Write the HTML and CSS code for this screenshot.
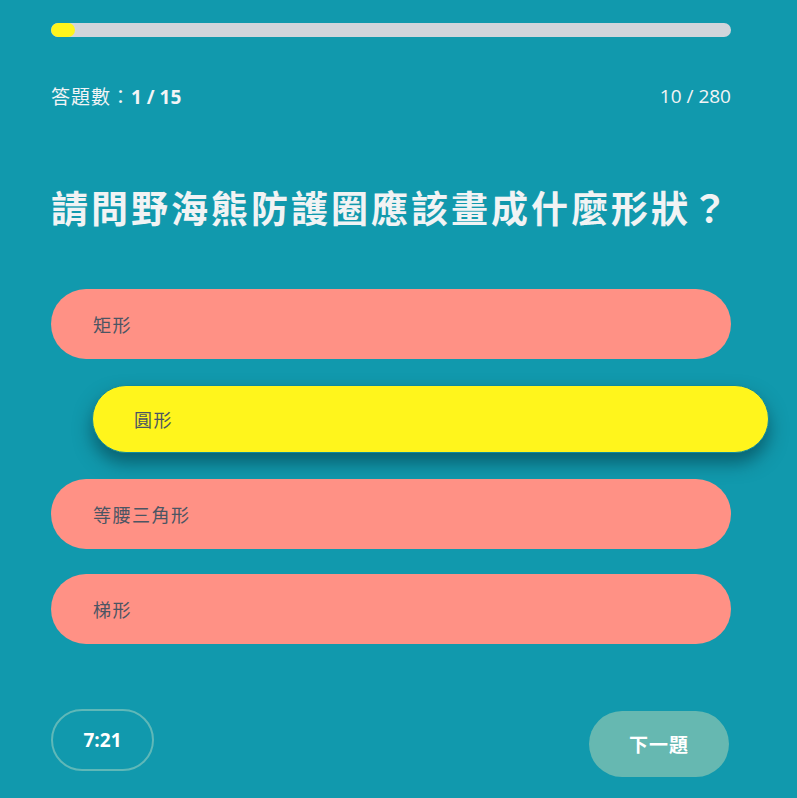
FILE: index.html
```html
<!DOCTYPE html>
<html lang="zh-Hant">
<head>
<meta charset="utf-8">
<link rel="stylesheet" href="styles.css">
</head>
<body>
<div class="quiz">
  <div class="progress"><div class="progress-fill" style="width:24px"></div></div>
  <div class="meta">
    <div class="count"><span class="label">答題數：</span><b>1 / 15</b></div>
    <div class="score">10 / 280</div>
  </div>
  <h1 class="question">請問野海熊防護圈應該畫成什麼形狀？</h1>
  <div class="options">
    <div class="option">矩形</div>
    <div class="option selected">圓形</div>
    <div class="option">等腰三角形</div>
    <div class="option">梯形</div>
  </div>
  <div class="footer">
    <div class="timer">7:21</div>
    <div class="next">下一題</div>
  </div>
</div>
</body>
</html>
```
FILE: styles.css
```css
html, body {
  margin: 0;
  padding: 0;
  background: #1199ad;
  font-family: "Open Sans", "Noto Sans CJK TC", sans-serif;
}
.quiz {
  width: 680px;
  padding: 23px 0 0 51px;
}
.progress {
  height: 14px;
  border-radius: 7px;
  background: #d1d5db;
  overflow: hidden;
}
.progress-fill {
  height: 100%;
  border-radius: 7px;
  background: #fff51b;
}
.meta {
  display: flex;
  justify-content: space-between;
  align-items: center;
  margin-top: 46px;
  height: 26px;
  color: #f3f4f6;
  font-size: 19px;
}
.count .label {
  letter-spacing: 1px;
}
.count b {
  font-weight: 700;
}
.question {
  margin: 76px 0 0;
  height: 48px;
  line-height: 48px;
  font-size: 37px;
  letter-spacing: 3px;
  font-weight: 600;
  color: #f1f3f4;
}
.options {
  margin-top: 56px;
  display: flex;
  flex-direction: column;
  gap: 25px;
}
.option {
  box-sizing: border-box;
  height: 70px;
  border-radius: 35px;
  background: #ff9185;
  color: #4b5563;
  font-size: 18px;
  letter-spacing: 1.5px;
  display: flex;
  align-items: center;
  padding-left: 42px;
}
.option.selected {
  width: 677px;
  height: 68px;
  margin: 1px 0 1px 41px;
  background: #fff51c;
  border: 1px solid #0f8a9c;
  box-shadow: 0 10px 18px rgba(0, 40, 50, 0.5);
  padding-left: 41px;
}
.footer {
  display: flex;
  justify-content: space-between;
  align-items: flex-start;
  margin-top: 65px;
}
.timer {
  box-sizing: border-box;
  width: 103px;
  height: 62px;
  border: 2px solid #5fb8b8;
  border-radius: 31px;
  display: flex;
  align-items: center;
  justify-content: center;
  color: #ffffff;
  font-weight: 700;
  font-size: 19px;
}
.next {
  width: 140px;
  height: 66px;
  margin-top: 2px;
  margin-right: 2px;
  border-radius: 33px;
  background: #66b8b1;
  display: flex;
  align-items: center;
  justify-content: center;
  color: #ffffff;
  font-weight: 700;
  font-size: 19px;
  letter-spacing: 1px;
}
```
